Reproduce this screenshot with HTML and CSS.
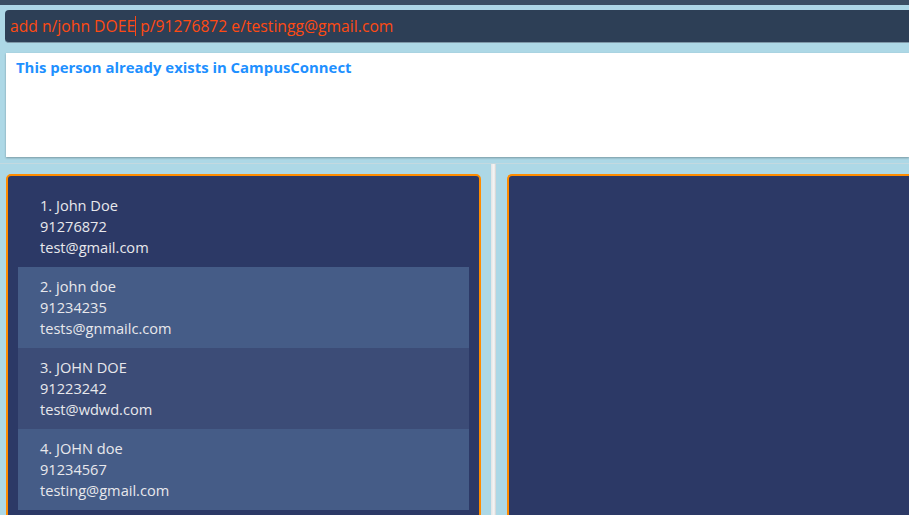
FILE: index.html
```html
<!DOCTYPE html>
<html>
<head>
<meta charset="utf-8">
<link rel="stylesheet" href="styles.css">
</head>
<body>
<div class="topbar"></div>
<div class="command"><span>add n/john DOEE</span><span class="caret"></span><span> p/91276872 e/testingg@gmail.com</span></div>
<div class="result">This person already exists in CampusConnect</div>
<div class="main">
  <div class="panel left">
    <div class="cell c1"><div>1. John Doe</div><div>91276872</div><div>test@gmail.com</div></div>
    <div class="cell c2"><div>2. john doe</div><div>91234235</div><div>tests@gnmailc.com</div></div>
    <div class="cell c3"><div>3. JOHN DOE</div><div>91223242</div><div>test@wdwd.com</div></div>
    <div class="cell c2"><div>4. JOHN doe</div><div>91234567</div><div>testing@gmail.com</div></div>
  </div>
  <div class="divider"></div>
  <div class="panel right"></div>
</div>
</body>
</html>
```
FILE: styles.css
```css
html, body { margin: 0; padding: 0; overflow: hidden; }
body {
  background: #add8e6;
  width: 909px;
  height: 515px;
  font-family: "Open Sans", "Noto Sans", sans-serif;
}
.topbar { height: 5px; background: #3a4f63; }
.command {
  margin: 5px 0 0 5px;
  height: 33px;
  background: #2d3f56;
  border-radius: 4px 0 0 4px;
  border-bottom: 1px solid #7f98a8;
  box-sizing: border-box;
  display: flex;
  align-items: center;
  padding-left: 5px;
  color: #ff4a12;
  font-size: 15.7px;
  white-space: pre;
}
.caret { display: inline-block; width: 1px; height: 20px; background: #ff4a12; }
.result {
  margin: 10px 0 0 6px;
  height: 104px;
  background: #fff;
  box-shadow: 0 1px 2px rgba(0,0,0,0.3);
  color: #1e90ff;
  font-weight: bold;
  font-size: 14.9px;
  padding: 4px 0 0 10px;
  box-sizing: border-box;
}
.main {
  margin-top: 6px;
  border-top: 1px solid #c3d9e0;
  display: flex;
  height: 352px;
  padding-top: 10px;
  box-sizing: border-box;
  overflow: hidden;
}
.panel {
  border: 2px solid #ff8c00;
  border-radius: 5px;
  background: #2c3966;
  box-sizing: border-box;
  height: 350px;
}
.left { margin-left: 6px; width: 475px; padding: 10px 10px 0 10px; }
.divider {
  width: 5px;
  margin: -10px 11px 0 10px;
  height: 352px;
  background: linear-gradient(to right, #e4e4e4, #f6f6f6 60%, #d0d0d0);
}
.right { flex: 1; border-right: none; border-radius: 5px 0 0 5px; }
.cell {
  height: 81px;
  box-sizing: border-box;
  padding: 9px 0 0 22px;
  color: #e8e8ec;
  font-size: 14.6px;
  line-height: 21px;
}
.c1 { background: #2c3966; }
.c2 { background: #455c87; }
.c3 { background: #3c4c77; }
```
